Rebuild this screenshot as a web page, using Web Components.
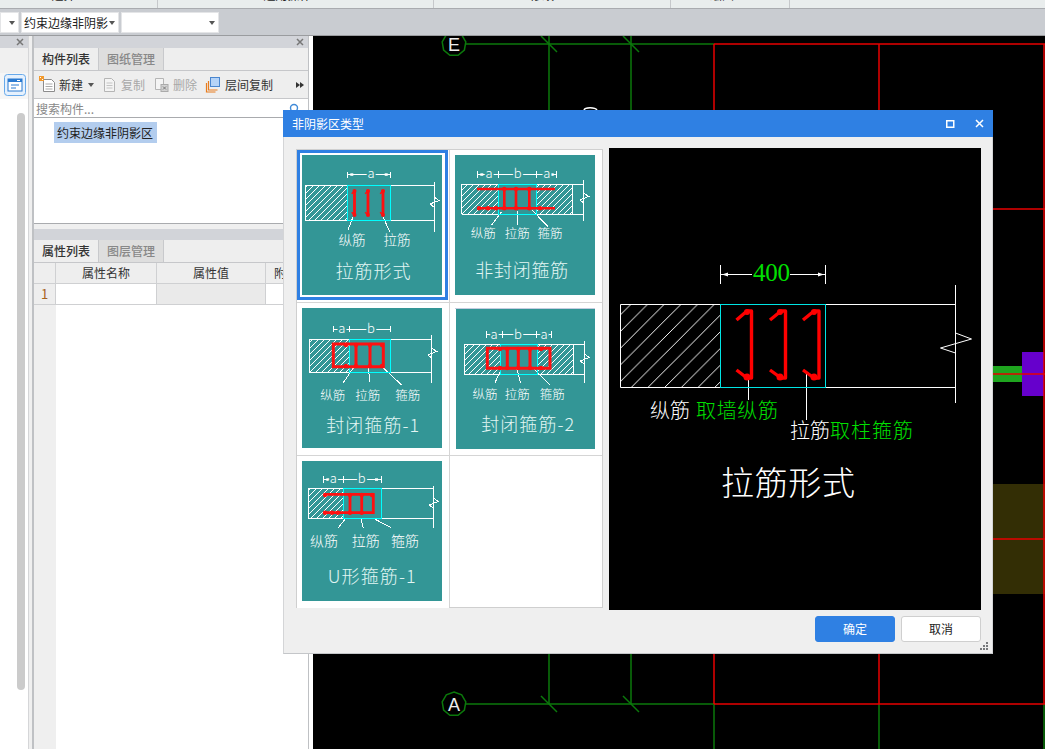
<!DOCTYPE html>
<html lang="zh">
<head>
<meta charset="utf-8">
<title>非阴影区类型</title>
<style>
html,body{margin:0;padding:0;height:749px;overflow:hidden;background:#fff}
body{font:12px "Noto Sans CJK SC","Liberation Sans",sans-serif;color:#333}
</style>
</head>
<body>
<gtj-app></gtj-app>
<script>
const CJK='"Noto Sans CJK SC","Liberation Sans",sans-serif';
function def(name,html){
  customElements.define(name,class extends HTMLElement{
    constructor(){super();const r=this.attachShadow({mode:'open'});r.innerHTML=typeof html==='function'?html(this):html;}
  });
}

/* ---------- top strips ---------- */
def('ribbon-strip',`<style>
:host{display:flex;height:9px;box-sizing:border-box;background:#e9eded;border-bottom:1px solid #a9abaf;overflow:hidden}
div{box-sizing:border-box;height:8px;border-right:1px solid #c6c8cb;overflow:hidden;text-align:center;color:#222;font:12px/8px ${CJK}}
span{display:block;margin-top:-12px;line-height:14px}
</style>
<div style="width:158px;padding-right:30px"><span>选择</span></div>
<div style="width:276px;padding-right:16px"><span>通用操作</span></div>
<div style="width:237px;padding-right:20px"><span>修改</span></div>
<div style="width:119px;padding-right:16px"><span>绘图</span></div>`);

def('drop-box',h=>`<style>
:host{display:flex;align-items:center;box-sizing:border-box;height:21px;background:#fff;border:1px solid #e4e5e7;overflow:hidden;font:12px ${CJK};color:#222;white-space:nowrap}
span{flex:1;padding-left:2px;overflow:hidden}
i{width:0;height:0;border:3.5px solid transparent;border-top:4px solid #555;border-bottom:0;margin-right:3px;flex:none}
</style><span><slot></slot></span><i></i>`);

def('tool-strip',`<style>
:host{display:flex;gap:2px;align-items:flex-start;box-sizing:border-box;height:27px;padding-top:3px;background:#c9ccd1;border-bottom:1px solid #9a9c9f}
</style>
<drop-box style="width:19px"></drop-box>
<drop-box style="width:98px">约束边缘非阴影</drop-box>
<drop-box style="width:98px"></drop-box>`);

/* ---------- left rail ---------- */
def('pane-head',`<style>
:host{display:flex;justify-content:flex-end;align-items:center;box-sizing:border-box;background:#d2d4d9;padding-right:4px;height:var(--h,12px)}
svg{display:block}
</style><slot><svg width="8" height="8" viewBox="0 0 8 8"><path d="M1 1l6 6M7 1L1 7" stroke="#777" stroke-width="1.500"/></svg></slot>`);

def('side-rail',`<style>
:host{display:flex;flex-direction:column;width:33px;box-sizing:border-box;background:#fff;border-right:1px solid #bfc1c4}
.inner{flex:1;width:28px;display:flex;flex-direction:column}
.top{height:25px;background:#f0f0f0}
.ico{height:26px;background:#f6f6f6;padding-left:3px;box-sizing:border-box}
.ico svg{display:block}
.bar{width:8px;height:577px;margin:14px 0 0 17px;background:#cbcbcb;border-radius:4px}
.wrap{flex:1;display:flex}
.sep{width:4px;background:#efefef;border-left:1px solid #d5d6d8;box-sizing:border-box}
</style>
<div class="wrap"><div class="inner"><pane-head></pane-head><div class="top"></div>
<div class="ico"><svg width="24" height="24" viewBox="0 0 24 24"><rect x="1.500" y="1.500" width="21" height="21" rx="3" fill="#e6f1fd" stroke="#67a9ea"/><rect x="5" y="6" width="14" height="12" fill="#fff" stroke="#2b7ad0"/><rect x="5" y="6" width="14" height="3" fill="#2b7ad0"/><path d="M8 12h8M8 15h5" stroke="#2b7ad0"/><rect x="14" y="7" width="3" height="1" fill="#fff"/></svg></div>
<div class="bar"></div></div><div class="sep"></div></div>`);

/* ---------- middle panel ---------- */
def('panel-tabs',h=>`<style>
:host{display:flex;height:23px;box-sizing:border-box;background:#eee;border-bottom:1px solid #c6c7ca;font:12px/22px ${CJK}}
div{width:65px;box-sizing:border-box;text-align:center;border-right:1px solid #c8c9cc}
.a{color:#333;font-weight:500}
.b{background:#dedede;color:#888;font-weight:500}
</style><div class="a">${h.getAttribute('a')}</div><div class="b">${h.getAttribute('b')}</div>`);

def('tool-button',h=>{
const icons={
 new:`<path d="M4.500 3.500h8l3 3v9h-11z" fill="#fff" stroke="#8c8c8c"/><path d="M6.500 8h7M6.500 10.500h7M6.500 13h7" stroke="#aaa"/><rect x="0" y="0" width="5" height="5" fill="#f29a2e"/><path d="M1 1h1v1H1zM3 3h1v1H3z" fill="#fff"/>`,
 copy:`<path d="M3.500 2.500h7l3 3v10h-10z" fill="#f4f4f4" stroke="#b5b5b5"/><path d="M5.500 7h6M5.500 9.500h6M5.500 12h6" stroke="#c4c4c4"/>`,
 del:`<path d="M2.500 2.500h8v11h-8z" fill="#f4f4f4" stroke="#b5b5b5"/><rect x="8" y="8.500" width="7" height="7" fill="#d2d2d2" stroke="#aaa"/><path d="M10 10.500l3 3M13 10.500l-3 3" stroke="#777"/>`,
 layer:`<path d="M1.500 7v9h9" fill="none" stroke="#e87c1e" stroke-width="1.200"/><path d="M3.500 5v9h9" fill="none" stroke="#e87c1e" stroke-width="1.200"/><rect x="5.500" y="1.500" width="9" height="9" fill="#b5d3f7" stroke="#4a86cf"/>`
};
return `<style>
:host{display:flex;align-items:center;gap:3px;font:12px ${CJK};color:${h.hasAttribute('off')?'#a8a8a8':'#333'};white-space:nowrap}
svg{display:block;flex:none}
</style><svg width="17" height="17" viewBox="0 0 17 17">${icons[h.getAttribute('icon')]}</svg><slot></slot>`;
});

def('component-panel',`<style>
:host{display:flex;flex-direction:column;width:276px;box-sizing:border-box;background:#fff;border-left:1px solid #bfc1c4;border-right:1px solid #bfc1c4;overflow:hidden}
.tb{display:flex;align-items:center;height:28px;background:#eee;border-bottom:1px solid #c6c7ca;padding-left:5px;box-sizing:border-box}
.tb tool-button{margin-right:8px}
.tb .more{margin-left:auto;margin-right:4px;display:flex}
.tb .more i{width:0;height:0;border-left:4px solid #333;border-top:3px solid transparent;border-bottom:3px solid transparent}
.tb .caret{width:0;height:0;border:3px solid transparent;border-top:4px solid #555;border-bottom:0;margin:0 7px 0 -3px}
.search{display:flex;align-items:center;justify-content:space-between;height:19px;box-sizing:border-box;border-bottom:1px solid #a9abae;padding:0 8px 0 2px;color:#888;font:12px ${CJK}}
.search svg{display:block;margin-top:1px}
.tree{height:106px;padding:4px 0 0 20px;box-sizing:border-box;font:12px/21px ${CJK};color:#222;border-bottom:1px solid #a9abae}
.tree span{display:inline-block;background:#b3cdee;height:21px;width:103px;padding-left:3px;box-sizing:border-box;white-space:nowrap;overflow:hidden}
.gap{height:5px;background:#efefef}
pane-head{flex:none}
.tbl{flex:1;display:grid;grid-template-columns:22px 101px 109px 1fr;grid-template-rows:21px 21px 1fr;font:12px ${CJK};color:#333}
.tbl>div{box-sizing:border-box;border-right:1px solid #cfd0d2;border-bottom:1px solid #cfd0d2;text-align:center;line-height:20px;overflow:hidden;white-space:nowrap}
.h{background:#eee}
.n{color:#a5641e;font-size:13px}
.v{background:#eaeaea}
.f{background:#fff;border:0!important}
.rh{background:#efefef;border-bottom:0!important;border-right:0!important}
.c4{text-align:left!important;padding-left:8px}
</style>
<pane-head></pane-head>
<panel-tabs a="构件列表" b="图纸管理"></panel-tabs>
<div class="tb">
<tool-button icon="new">新建</tool-button><i class="caret"></i>
<tool-button icon="copy" off>复制</tool-button>
<tool-button icon="del" off>删除</tool-button>
<tool-button icon="layer">层间复制</tool-button>
<span class="more"><i></i><i></i></span>
</div>
<div class="search"><span>搜索构件...</span><svg width="11" height="11" viewBox="0 0 11 11"><circle cx="5" cy="5" r="3.500" fill="none" stroke="#3f8ad8" stroke-width="1.400"/></svg></div>
<div class="tree"><span>约束边缘非阴影区</span></div>
<div class="gap"></div>
<pane-head style="--h:11px"><span></span></pane-head>
<panel-tabs a="属性列表" b="图层管理"></panel-tabs>
<div class="tbl">
<div class="h"></div><div class="h">属性名称</div><div class="h">属性值</div><div class="h c4">附加</div>
<div class="h n">1</div><div></div><div class="v"></div><div></div>
<div class="rh"></div><div class="f"></div><div class="f"></div><div class="f"></div>
</div>`);

/* ---------- CAD canvas ---------- */
const G='#0b780b',R='#e80000';
function oct(cx,cy,r,n){let p=[];for(let i=0;i<n;i++){const a=Math.PI*2*i/n-Math.PI/2;p.push((cx+r*Math.cos(a)).toFixed(1)+','+(cy+r*Math.sin(a)).toFixed(1));}return p.join(' ');}
def('cad-canvas',`<style>
:host{display:block;flex:1;background:#000;position:relative;overflow:hidden}
svg{display:block;position:absolute;left:0;top:0}
text{font:18px "Liberation Sans",sans-serif;fill:#eee;text-anchor:middle}
</style>
<svg width="732" height="713" viewBox="313 36 732 713">
<rect x="993" y="484" width="52" height="110" fill="#332e05"/>
<rect x="993" y="366" width="29" height="16" fill="#1fa51f"/>
<rect x="1022" y="352" width="22" height="44" fill="#6600cc"/>
<g stroke="${G}" stroke-width="1.500" fill="none">
<path d="M466 44H714M466 704H714"/>
<path d="M549 36V704M631 36V704M714 704V749M879 704V749M1044 704V749"/>
<path d="M541 36l16 16M623 36l16 16M541 696l16 16M623 696l16 16"/>
<polygon points="${oct(454,44,12,9)}"/>
<polygon points="${oct(454,704,12,9)}"/>
</g>
<g stroke="${R}" stroke-width="1.500" fill="none">
<path d="M714 44H1045M714 209H1045M714 374H1045M714 539H1045M714 704H1045"/>
<path d="M714 44V704M879 44V704M1044 44V704"/>
</g>
<path d="M584 110c1-3 11-3 13 0" fill="none" stroke="#fff" stroke-width="1.500"/>
<text x="454" y="50.500">E</text>
<text x="454" y="711">A</text>
</svg>`);

/* ---------- diagram thumbnails ---------- */
const T='#339696',RD='#ff1010';
const CARDS={
 tie:{ticks:[45.3,88.7],sq:1,dy:19.3,tt:[17,23],dim:[[69,'a']],rect:[3.3,45.3,30,65.7],hatch:[[3.3,45.3]],cy:[45.3,88.7],end:132,v:[26.7,76.7],br:47,
  red:'M52.500 35V60M66 35V60M81 35V60',rw:2.800,hook:[[52.5,36],[52.5,60],[66,36],[66,60],[81,36],[81,60]],dots:[],
  lead:[[51,62,46,75],[81,62,88,77]],lab:[[50,'纵筋'],[95,'拉筋']],ly:90,ls:13.500,title:'拉筋形式',tx:71,ty:123,tl:75,ts:18},
 open:{ticks:[22.3,43.3,81.7,101.7],sq:1,dy:19.3,tt:[16,22.500],dim:[[34,'a'],[62.7,'b'],[91.7,'a']],rect:[6.7,117.7,29.3,59.3],hatch:[[6.7,43.3],[81.7,117.7]],cy:[43.3,81.7],end:128.7,v:[25,66],br:43,
  red:'M22 34H100M22 53.300H100M49.300 34V53.300M61 34V53.300M74.300 34V53.300',rw:2.600,dots:[[24,53.300],[33,53.300],[41,53.300],[49.300,53.300],[61,53.300],[74.300,53.300],[85,53.300],[49.300,34],[61,34],[74.300,34]],
  lead:[[46.7,56.7,36.7,70],[62,56,62.500,70],[77,55,93,71.7]],lab:[[28.3,'纵筋'],[62.3,'拉筋'],[95,'箍筋']],ly:83.300,ls:12.500,title:'非封闭箍筋',tx:66.7,ty:122,tl:93,ts:18},
 c1:{ticks:[31.3,47.3,88.7],dy:21,tt:[18,24],dim:[[39.7,'a'],[69,'b']],rect:[7.3,129.7,31.3,64.3],hatch:[[7.3,47.3]],cy:[47.3,88.7],end:129.7,v:[27,74.7],br:45,
  red:'M31.300 36H81.300V58.700H31.300ZM54 36V58.700M68 36V58.700',rw:3,dots:[[44,37],[54,37],[68,37],[80,37],[44,58],[54,58],[68,58],[80,58]],
  lead:[[51.3,60,41.3,74.7],[66.3,60,68,73.7],[81.3,60,99.7,77]],lab:[[30.7,'纵筋'],[65.7,'拉筋'],[105.7,'箍筋']],ly:92,ls:12.500,title:'封闭箍筋-1',tx:70.7,ty:123.700,tl:93,ts:18},
 c2:{ticks:[30.7,46.3,80.7,95.7],sq:1,dy:25.7,tt:[22,28.500],dim:[[38,'a'],[62,'b'],[88,'a']],rect:[8.3,117.3,35.3,65.3],hatch:[[8.3,44.7],[81.3,117.3]],cy:[44.7,81.3],end:128.3,v:[31.7,73.7],br:50,
  red:'M31.300 39.300H94V59.300H31.300ZM51.300 39.300V59.300M62.300 39.300V59.300M74 39.300V59.300',rw:3,dots:[[44,40],[51.300,40],[62.300,40],[74,40],[85,40],[44,59],[51.300,59],[62.300,59],[74,59],[85,59]],
  lead:[[45.7,59.3,39,73.7],[60.7,59.3,64.7,74.3],[77.3,59.3,94,76]],lab:[[29,'纵筋'],[61.3,'拉筋'],[96.3,'箍筋']],ly:90,ls:12.500,title:'封闭箍筋-2',tx:71.7,ty:121.700,tl:93,ts:18},
 u:{ticks:[21.3,41.3,79],sq:1,dy:18.3,tt:[15,21.500],dim:[[31.3,'a'],[59.7,'b']],rect:[6.3,131.3,27.3,57.3],hatch:[[6.3,41.3]],cy:[41.3,79.7],end:131.3,v:[25,66.7],br:42,
  red:'M23 33.300H71.300V51.700H21.300M48 33.300V51.700M59.700 33.300V51.700',rw:2.800,dots:[[23,34],[48,34],[59.700,34],[70,34],[23,51.700],[30,51.700],[36,51.700],[48,51.700],[59.700,51.700]],
  lead:[[43,58.3,36.3,66.7],[59,58.3,61.3,66.7],[71.3,57.3,89,66.7]],lab:[[22,'纵筋'],[63.7,'拉筋'],[103,'箍筋']],ly:84.700,ls:14,title:'U形箍筋-1',tx:69.7,ty:122,tl:88,ts:18}
};
let pid=0;
function cardSVG(c,w){
  const id='h'+(pid++);
  const [rx0,rx1,ry0,ry1]=c.rect;
  let s=`<svg width="${w}" height="140" viewBox="0 0 ${w} 140">
  <defs><pattern id="${id}" patternUnits="userSpaceOnUse" width="6" height="6"><path d="M-1 7L7 -1" stroke="#fff" stroke-width="1" fill="none" shape-rendering="crispEdges"/></pattern></defs>`;
  c.hatch.forEach(h=>{s+=`<rect x="${h[0]}" y="${ry0}" width="${h[1]-h[0]}" height="${ry1-ry0}" fill="url(#${id})"/>`;});
  s+=`<g stroke="#fff" fill="none" stroke-width="1" shape-rendering="crispEdges">
  <path d="M${rx0} ${ry0}H${c.end}M${rx0} ${ry1}H${c.end}M${rx0} ${ry0}V${ry1}M${rx1} ${ry0}V${ry1}"/>
  <path d="M${c.end} ${c.v[0]}V${c.v[1]}"/>
  <path d="M${c.end} ${c.br-5}l5 3.500l-9 3.500l4 3"/>
  <path d="M${c.ticks[0]} ${c.dy}H${c.ticks[c.ticks.length-1]}"/>`;
  c.ticks.forEach(t=>{s+=`<path d="M${t} ${c.tt[0]}V${c.tt[1]}"/>`;});
  c.lead.forEach(l=>{s+=`<path d="M${l[0]} ${l[1]}L${l[2]} ${l[3]}"/>`;});
  s+=`</g><rect x="${c.cy[0]}" y="${ry0}" width="${c.cy[1]-c.cy[0]}" height="${ry1-ry0}" fill="none" stroke="#0ff" stroke-width="1" shape-rendering="crispEdges"/>`;
  if(c.sq){const a=c.ticks[0],b=c.ticks[c.ticks.length-1];s+=`<rect x="${a+3}" y="${c.dy-1}" width="3" height="2.500" fill="#fff"/><rect x="${b-6}" y="${c.dy-1}" width="3" height="2.500" fill="#fff"/>`;}
  s+=`<path d="${c.red}" fill="none" stroke="${RD}" stroke-width="${c.rw}"/>`;
  (c.hook||[]).forEach(d=>{s+=`<circle cx="${d[0]}" cy="${d[1]}" r="2" fill="${RD}"/><path d="M${d[0]} ${d[1]}l-2.800 ${d[1]<45?2.800:-2.800}" stroke="${RD}" stroke-width="1.600"/>`;});
  c.dots.forEach(d=>{s+=`<circle cx="${d[0]}" cy="${d[1]}" r="2.200" fill="${RD}"/>`;});
  c.dim.forEach(d=>{s+=`<text class="dim" x="${d[0]}" y="${c.dy+4}">${d[1]}</text>`;});
  c.lab.forEach(l=>{s+=`<text class="lab" x="${l[0]}" y="${c.ly}" style="font-size:${c.ls}px">${l[1]}</text>`;});
  s+=`<text class="ttl" x="${c.tx}" y="${c.ty}" textLength="${c.tl}" style="font-size:${c.ts}px">${c.title}</text></svg>`;
  return s;
}
def('rebar-card',h=>{
 const c=CARDS[h.getAttribute('kind')], sel=h.hasAttribute('selected'), nudge=h.hasAttribute('nudge');
 return `<style>
:host{display:block;background:#fff;width:152px;height:152px}
.fr{box-sizing:border-box;width:151px;height:150px;border:3px solid ${sel?'#2f80e3':'transparent'};padding:2px 0 0 2px}
.strip{height:1px;width:140px;background:#c3cde0}
svg{display:block;background:${T}}
.nudge svg{margin-left:1px}
text{font-family:${CJK};fill:#fff;text-anchor:middle;font-weight:300}
.dim{font-size:13px;paint-order:stroke;stroke:${T};stroke-width:4px}
.ttl{fill:#e2f6f4}
</style><div class="fr ${nudge?'nudge':''}">${nudge?'<div class="strip"></div>':''}${cardSVG(c,nudge?139:140)}</div>`;
});

/* ---------- large preview ---------- */
def('rebar-preview',`<style>
:host{display:block;width:372px;height:462px;background:#000}
svg{display:block}
text{font-family:${CJK};font-weight:300}
.w{fill:#fff}.g{fill:#00e000}
</style>
<svg width="372" height="462" viewBox="609 148 372 462">
<defs><pattern id="pv" patternUnits="userSpaceOnUse" width="16.700" height="16.700"><path d="M-1 17.700L17.700 -1" stroke="#fff" stroke-width="1" fill="none" shape-rendering="crispEdges"/></pattern></defs>
<rect x="620.500" y="304.500" width="100" height="83" fill="url(#pv)"/>
<g stroke="#fff" fill="none">
<path d="M620.500 304.500H955.500M620.500 387.500H955.500M620.500 304.500V387.500M955.500 285V403"/>
<path d="M955.500 333l16 6l-31 9l15 5"/>
<path d="M720.500 265V284M825.500 265V284M720.500 274.500H752M790 274.500H825.500"/>
<path d="M748.500 380V400M806.500 373V420" stroke-width="1"/>
</g>
<path d="M722 274.500l6-2v4zM824 274.500l-6-2v4z" fill="#fff"/>
<rect x="720.500" y="304.500" width="105" height="83" fill="none" stroke="#00e5e5"/>
<g fill="none" stroke="#f00" stroke-width="3.400" stroke-linejoin="round">
<path d="M736.500 320L747 311H751.500V378H747L736.500 370"/>
<path d="M770 320L781 311H785.500V378H781L770 370"/>
<path d="M803 320L814 311H819V378H814L803 370"/>
</g>
<g fill="#f00"><circle cx="747" cy="312" r="3"/><circle cx="747" cy="377" r="3.500"/><circle cx="780" cy="312" r="3"/><circle cx="780" cy="377" r="3.500"/><circle cx="814" cy="312" r="3"/><circle cx="814" cy="377" r="3.500"/></g>
<text class="g" x="753" y="281" style="font:25px 'Liberation Serif',serif" textLength="37">400</text>
<text class="w" x="650" y="418" font-size="20">纵筋</text>
<text class="g" x="696" y="418" font-size="20" textLength="82">取墙纵筋</text>
<text class="w" x="790" y="438" font-size="20">拉筋</text>
<text class="g" x="830" y="438" font-size="20" textLength="83">取柱箍筋</text>
<text class="w" x="721" y="495" font-size="33" textLength="134">拉筋形式</text>
</svg>`);

/* ---------- dialog ---------- */
def('app-button',h=>`<style>
:host{display:block;box-sizing:border-box;width:80px;height:26px;border-radius:3px;text-align:center;font:12px/24px ${CJK};
${h.hasAttribute('primary')?'background:#2f80e3;color:#fff;border:1px solid #2f80e3':'background:#fff;color:#222;border:1px solid #cfcfcf'}}
</style><slot></slot>`);

def('rebar-dialog',`<style>
:host{display:flex;flex-direction:column;position:absolute;left:283px;top:110px;width:710px;height:544px;box-sizing:border-box;background:#efefef;border-bottom:1px solid #c4c6c9;border-left:1px solid #d4d5d7;border-right:1px solid #d4d5d7}
.bar{display:flex;align-items:center;height:27px;flex:none;background:#2f80e3;color:#fff;font:12px ${CJK};padding:0 9px 0 9px;margin:0 -1px}
.bar span{flex:1}
.bar svg{display:block;margin-left:20px}
.body{display:flex;gap:6px;padding:11px 11px 0 12px;flex:none}
.list{box-sizing:border-box;width:307px;height:459px;margin-top:1px;border:1px solid #cfcfcf;background:#d5d5d5;display:grid;grid-template-columns:152px 152px;grid-template-rows:152px 152px 151px;gap:1px}
.blank{background:#fff}
.foot{display:flex;justify-content:flex-end;gap:6px;padding:6px 11px 0 0;position:relative}
.grip{position:absolute;right:3px;bottom:-9px}
.grip svg{display:block}
</style>
<div class="bar"><span>非阴影区类型</span>
<svg width="9" height="8" viewBox="0 0 9 8"><rect x=".75" y=".75" width="7" height="6.500" fill="none" stroke="#fff" stroke-width="1.500"/></svg>
<svg width="9" height="9" viewBox="0 0 9 9"><path d="M1 1l7 7M8 1L1 8" stroke="#fff" stroke-width="1.500"/></svg></div>
<div class="body">
<div class="list">
<rebar-card kind="tie" selected></rebar-card>
<rebar-card kind="open"></rebar-card>
<rebar-card kind="c1"></rebar-card>
<rebar-card kind="c2" nudge></rebar-card>
<rebar-card kind="u"></rebar-card>
<div class="blank"></div>
</div>
<rebar-preview></rebar-preview>
</div>
<div class="foot"><app-button primary>确定</app-button><app-button>取消</app-button>
<div class="grip"><svg width="9" height="9" viewBox="0 0 9 9" fill="#77797c"><rect x="6" y="0" width="2" height="2"/><rect x="3" y="3" width="2" height="2"/><rect x="6" y="3" width="2" height="2"/><rect x="0" y="6" width="2" height="2"/><rect x="3" y="6" width="2" height="2"/><rect x="6" y="6" width="2" height="2"/></svg></div></div>`);

/* ---------- app ---------- */
def('gtj-app',`<style>
:host{display:flex;flex-direction:column;position:relative;width:1045px;height:749px;overflow:hidden;background:#fff}
.main{flex:1;display:flex;min-height:0}
.pad{width:4px;background:#fff;flex:none}
</style>
<ribbon-strip></ribbon-strip>
<tool-strip></tool-strip>
<div class="main"><side-rail></side-rail><component-panel></component-panel><div class="pad"></div><cad-canvas></cad-canvas></div>
<rebar-dialog></rebar-dialog>`);
</script>
</body>
</html>
